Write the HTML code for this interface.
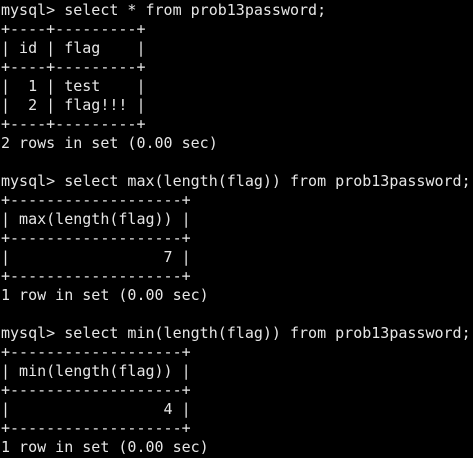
<!DOCTYPE html>
<html><head><style>
html,body{margin:0;padding:0;background:#000;}
body{width:473px;height:458px;overflow:hidden;}
pre{margin:0;padding:1px 0 0 1px;font-family:"DejaVu Sans Mono","Liberation Mono",monospace;font-size:15px;line-height:19px;color:#e6e6e6;}
</style></head><body><pre>mysql&gt; select * from prob13password;
+----+---------+
| id | flag    |
+----+---------+
|  1 | test    |
|  2 | flag!!! |
+----+---------+
2 rows in set (0.00 sec)

mysql&gt; select max(length(flag)) from prob13password;
+-------------------+
| max(length(flag)) |
+-------------------+
|                 7 |
+-------------------+
1 row in set (0.00 sec)

mysql&gt; select min(length(flag)) from prob13password;
+-------------------+
| min(length(flag)) |
+-------------------+
|                 4 |
+-------------------+
1 row in set (0.00 sec)</pre></body></html>
